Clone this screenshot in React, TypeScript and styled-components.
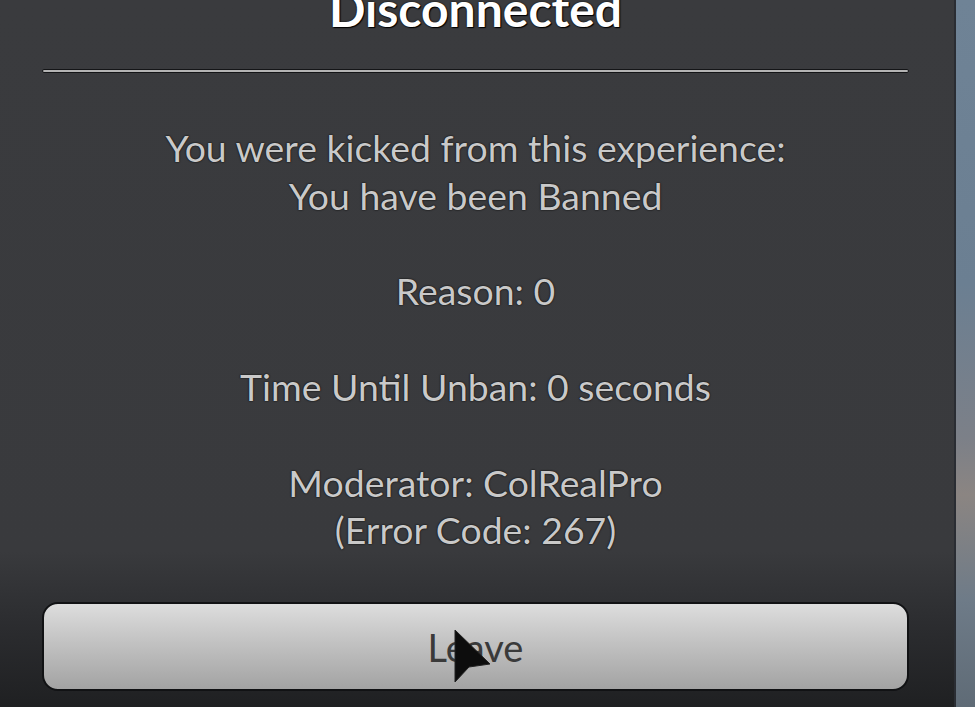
import React from "react";
import styled, { createGlobalStyle } from "styled-components";

const Global = createGlobalStyle`
  html, body { margin: 0; padding: 0; background: #393a3d; overflow: hidden; }
  #root { width: 975px; height: 707px; }
`;

const Screen = styled.div`
  display: flex;
  width: 975px;
  height: 707px;
  overflow: hidden;
`;

const Panel = styled.div`
  position: relative;
  flex: 1;
  display: flex;
  flex-direction: column;
  padding: 0 45px 0 42px;
  overflow: hidden;
  background: linear-gradient(
    to bottom,
    #3a3b3e 0%,
    #393a3d 78%,
    #2c2d30 88%,
    #1f2022 100%
  );
  border-right: 2px solid #2a2d33;
  font-family: Lato, "Liberation Sans", sans-serif;
`;

const Backdrop = styled.div`
  width: 19px;
  flex: none;
  background: linear-gradient(
    to bottom,
    #6f8396 0%,
    #6b7f92 40%,
    #7c8088 62%,
    #8b8582 70%,
    #6e7b88 85%,
    #5f6b76 100%
  );
`;

const Title = styled.h1`
  margin: -19px 0 0;
  height: 56px;
  text-align: center;
  font-size: 48px;
  font-weight: 700;
  line-height: 56px;
  color: #ffffff;
  text-shadow: 0 0 2px #000, 1px 1px 1px #000;
`;

const Divider = styled.hr`
  margin: 32px 0 0;
  height: 2px;
  border: 1px solid #141517;
  border-radius: 2px;
  background: #b4b4b4;
`;

const Message = styled.p`
  margin: 51px 0 0;
  text-align: center;
  font-size: 37.4px;
  line-height: 47.8px;
  color: #c9c9c9;
  text-shadow: 0 0 2px #111, 0 0 1px #000;
`;

const Line = styled.span<{ $gap?: boolean }>`
  display: block;
  white-space: nowrap;
  margin-top: ${(p) => (p.$gap ? "47.8px" : "0")};
`;

const LeaveButton = styled.button`
  margin-top: auto;
  margin-bottom: 16px;
  height: 89px;
  border: 2px solid #111214;
  border-radius: 16px;
  background: linear-gradient(to bottom, #dddddd 0%, #c2c2c2 45%, #a3a3a3 100%);
  font-family: Lato, "Liberation Sans", sans-serif;
  font-size: 38px;
  color: #3a3a3a;
  cursor: pointer;
  padding: 0;
`;

const Cursor = styled.svg`
  position: absolute;
  left: 448px;
  top: 626px;
  width: 48px;
  height: 62px;
  pointer-events: none;
`;

export default function App() {
  return (
    <>
      <Global />
      <Screen>
        <Panel>
          <Title>Disconnected</Title>
          <Divider />
          <Message>
            <Line>You were kicked from this experience:</Line>
            <Line>You have been Banned</Line>
            <Line $gap>Reason: 0</Line>
            <Line $gap>Time Until Unban: 0 seconds</Line>
            <Line $gap>Moderator: ColRealPro</Line>
            <Line>(Error Code: 267)</Line>
          </Message>
          <LeaveButton>Leave</LeaveButton>
          <Cursor viewBox="448 626 48 62">
            <path
              d="M455 630 L455 682 L469 667 L490 664 Z"
              fill="#0d0d0d"
              stroke="#222"
              strokeWidth="1"
              strokeLinejoin="round"
            />
          </Cursor>
        </Panel>
        <Backdrop />
      </Screen>
    </>
  );
}
